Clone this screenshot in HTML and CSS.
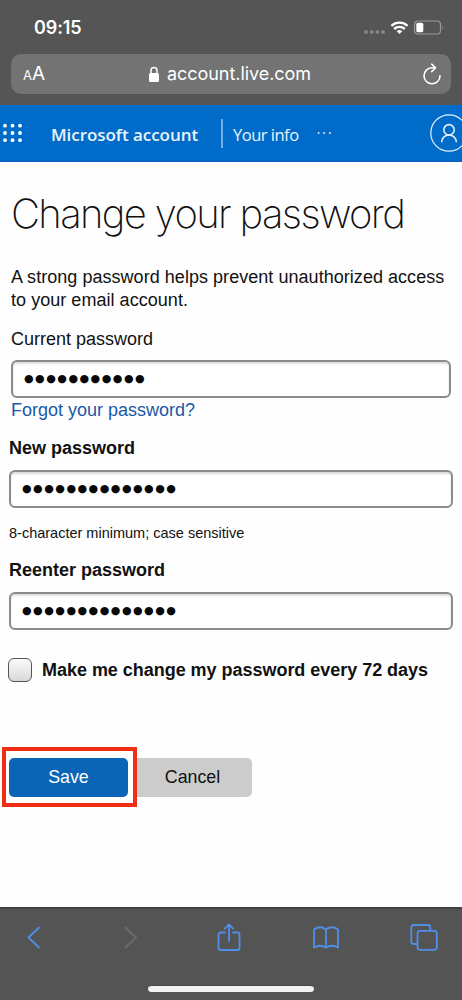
FILE: index.html
```html
<!DOCTYPE html>
<html lang="en">
<head>
<meta charset="utf-8">
<meta name="viewport" content="width=device-width">
<title>Change your password</title>
<link rel="stylesheet" href="styles.css">
</head>
<body>
<div class="phone">
  <header class="browser-top">
    <div class="status">
      <span class="time">09:15</span>
      <svg class="status-icons" width="80" height="16" viewBox="0 0 80 16">
        <g fill="#858585"><circle cx="3" cy="12" r="2"/><circle cx="8.8" cy="12" r="2"/><circle cx="14.5" cy="12" r="2"/><circle cx="20" cy="12" r="2"/></g>
        <g fill="none" stroke="#fff" stroke-width="2.4"><path d="M28.4 5.8a12 12 0 0 1 16.2 0"/><path d="M31.2 9a7.8 7.8 0 0 1 10.6 0"/></g>
        <path d="M33.7 11.3a4.3 4.3 0 0 1 5.6 0L36.5 14z" fill="#fff"/>
        <rect x="51.5" y="1" width="26" height="13" rx="3.5" fill="none" stroke="#9a9a9a" stroke-width="1.2"/>
        <rect x="53.3" y="2.7" width="7" height="9.6" rx="1.5" fill="#fff"/>
        <path d="M79 5.5q1.6 2 0 4z" fill="#9a9a9a"/>
      </svg>
    </div>
    <div class="address">
      <span class="reader"><span class="small-a">A</span>A</span>
      <span class="site">
        <svg width="12" height="17" viewBox="0 0 12 17"><rect x="1" y="7" width="10" height="9" rx="1.5" fill="#fff"/><path d="M3 8V4.5a3 3 0 0 1 6 0V8" fill="none" stroke="#fff" stroke-width="1.5"/></svg>
        <span class="domain">account.live.com</span>
      </span>
      <svg class="reload" width="20" height="22" viewBox="0 0 20 22" fill="none" stroke="#fff" stroke-width="1.6" stroke-linecap="round" stroke-linejoin="round"><path d="M13.2 4.8H10a8 8 0 1 0 8 8"/><path d="M9.7 1.2l3.9 3.6-3.9 3.8"/></svg>
    </div>
  </header>
  <nav class="account-nav">
    <svg class="waffle" width="20" height="20" viewBox="0 0 20 20" fill="#fff"><circle cx="2" cy="2.7" r="1.9"/><circle cx="9.5" cy="2.7" r="1.9"/><circle cx="17" cy="2.7" r="1.9"/><circle cx="2" cy="10" r="1.9"/><circle cx="9.5" cy="10" r="1.9"/><circle cx="17" cy="10" r="1.9"/><circle cx="2" cy="17.2" r="1.9"/><circle cx="9.5" cy="17.2" r="1.9"/><circle cx="17" cy="17.2" r="1.9"/></svg>
    <span class="brand">Microsoft account</span>
    <span class="info">Your info</span>
    <svg class="more" width="15" height="4" viewBox="0 0 15 4" fill="#dceafa"><circle cx="1.6" cy="2" r="1"/><circle cx="7.2" cy="2" r="1"/><circle cx="12.9" cy="2" r="1"/></svg>
    <svg class="avatar" width="32" height="40" viewBox="0 0 32 40" fill="none" stroke="#e5f0fb" stroke-width="1.2"><circle cx="19" cy="20" r="18.2"/><g stroke-width="1.6"><circle cx="19" cy="16.8" r="5.2"/><path d="M11.7 29.2c0-9.6 14.6-9.6 14.6 0"/></g></svg>
  </nav>
  <main class="content">
    <h1 class="title">Change your password</h1>
    <p class="intro">A strong password helps prevent unauthorized access<br>to your email account.</p>
    <div class="label current">Current password</div>
    <div class="field narrow">●●●●●●●●●●●</div>
    <a class="forgot">Forgot your password?</a>
    <div class="label strong new">New password</div>
    <div class="field">●●●●●●●●●●●●●●</div>
    <div class="hint">8-character minimum; case sensitive</div>
    <div class="label strong reenter">Reenter password</div>
    <div class="field">●●●●●●●●●●●●●●</div>
    <div class="expiry"><span class="checkbox"></span><span class="expiry-label">Make me change my password every 72 days</span></div>
    <div class="actions">
      <div class="highlight"><button class="btn save">Save</button></div>
      <button class="btn cancel">Cancel</button>
    </div>
  </main>
  <footer class="browser-bottom">
    <div class="tools">
      <svg class="back" width="14" height="30" viewBox="0 0 14 30"><path d="M12 4.5L1.5 14.5 12 24.5"/></svg>
      <svg class="forward" width="14" height="30" viewBox="0 0 14 30"><path d="M1.5 4.5L12 14.5 1.5 24.5"/></svg>
      <svg class="share" width="24" height="30" viewBox="0 0 24 30"><path d="M8 9.5H3.8Q1.5 9.5 1.5 11.8V24.7Q1.5 27 3.8 27H20.2Q22.5 27 22.5 24.7V11.8Q22.5 9.5 20.2 9.5H16M12 18V1.5M7.8 5.6L12 1.3 16.2 5.6"/></svg>
      <svg class="book" width="26" height="30" viewBox="0 0 26 30"><path d="M13 6.5Q7 2 1 6.5V24.5Q7 21 13 24.5 19 21 25 24.5V6.5Q19 2 13 6.5zM13 6.5V24.5"/></svg>
      <svg class="tabs" width="28" height="30" viewBox="0 0 28 30"><rect x="7.5" y="7.8" width="19.3" height="19" rx="2.5"/><path d="M7.2 21H3.8Q1.3 21 1.3 18.5V4.5Q1.3 2 3.8 2H17.8Q20.3 2 20.3 4.5V7.6"/></svg>
    </div>
    <div class="home-indicator"></div>
  </footer>
</div>
</body>
</html>
```
FILE: styles.css
```css
* { box-sizing: border-box; }
body { margin: 0; background: #fff; color: #111; font-family: "Liberation Sans", Arial, sans-serif; }
svg { display: block; flex: none; }
.phone { width: 462px; height: 1000px; display: flex; flex-direction: column; overflow: hidden; background: #fefefe; white-space: nowrap; }

.browser-top { height: 105px; flex: none; background: #555; color: #fff; }
.status { height: 54px; display: flex; justify-content: space-between; align-items: flex-start; padding: 17px 19px 0 34px; font-family: Inter, sans-serif; }
.time { font-size: 18px; line-height: 22px; font-weight: 600; letter-spacing: -.1px; }
.status-icons { margin-top: 3px; }
.address { height: 40px; margin: 0 11px; border-radius: 10px; background: #737373; display: flex; align-items: center; justify-content: space-between; padding: 0 9px 0 12px; font-family: Inter, sans-serif; }
.reader { width: 125px; padding-top: 1px; font-size: 19px; line-height: 24px; }
.small-a { font-size: 13px; }
.site { display: flex; align-items: center; gap: 7px; }
.domain { font-size: 18px; line-height: 24px; letter-spacing: -.05px; }
.reload { margin-left: auto; }

.account-nav { height: 57px; flex: none; background: #006bc8; border-bottom: 1px solid #0b5fc0; color: #eaf3fc; display: flex; align-items: center; padding-left: 3px; font-family: "Open Sans", sans-serif; }
.brand { margin-left: 28px; width: 170px; padding-top: 3px; font-size: 17px; font-weight: 600; line-height: 28px; letter-spacing: -.05px; }
.info { padding: 3px 0 0 10px; width: 96px; border-left: 2px solid #77aee4; font-size: 16.5px; line-height: 26px; letter-spacing: -.5px; }
.avatar { margin-left: auto; }

.content { flex: 1; padding: 28px 9px 0; font-size: 18px; }
.title { margin: 0 0 0 2px; font-family: Inter, sans-serif; font-weight: 200; font-size: 40px; line-height: 48px; letter-spacing: -1.65px; }
.intro { margin: 28px 0 0 2px; line-height: 23px; letter-spacing: .04px; }
.label { line-height: 23px; }
.current { margin: 16px 0 9px 2px; }
.field { height: 38px; border: 2px solid #8b8b8b; border-radius: 6px; background: #fff; box-shadow: inset 0 2px 2px #ddd; padding-left: 11px; color: #080808; font-family: "DejaVu Sans", sans-serif; font-size: 11px; line-height: 34px; letter-spacing: 1.5px; }
.narrow { margin: 0 2px; }
.forgot { display: block; margin: 1px 0 0 2px; color: #1959a8; line-height: 23px; }
.strong { font-weight: bold; }
.new { margin: 15px 0 10px; }
.hint { margin-top: 16px; font-size: 14.5px; line-height: 18px; }
.reenter { margin: 17px 0 10px; }
.expiry { display: flex; align-items: center; gap: 10px; margin: 28px 0 0 -1px; font-weight: bold; line-height: 24px; letter-spacing: -.03px; }
.checkbox { width: 24px; height: 24px; border: 1px solid #555; border-radius: 6px; background: linear-gradient(#fbfbfb, #d8d8d8); }
.actions { display: flex; align-items: center; margin: 65px 0 0 -7px; }
.highlight { width: 135px; height: 60px; padding: 7px 0 0 3px; border: 4px solid #ef2f14; }
.btn { display: block; border: 0; padding: 0; height: 39px; font: 17.8px/39px "Liberation Sans", Arial, sans-serif; }
.save { width: 119px; border-radius: 5px; background: #0a65b6; color: #fff; }
.cancel { width: 115px; padding-right: 4px; border-radius: 0 5px 5px 0; background: #ccc; color: #111; }

.browser-bottom { height: 93px; flex: none; background: #545454; border-top: 2px solid #414141; }
.tools { display: flex; padding: 14px 0 0 27px; fill: none; stroke: #508fe6; stroke-width: 1.8; stroke-linejoin: round; stroke-linecap: round; }
.forward { margin-left: 83px; stroke: #6c6c6c; }
.share { margin-left: 79px; }
.book { margin-left: 72px; }
.tabs { margin-left: 71px; }
.home-indicator { width: 166px; height: 7px; margin: 32px auto 0; border-radius: 4px; background: #f2f2f2; border-top: 1px solid #444; }
```
